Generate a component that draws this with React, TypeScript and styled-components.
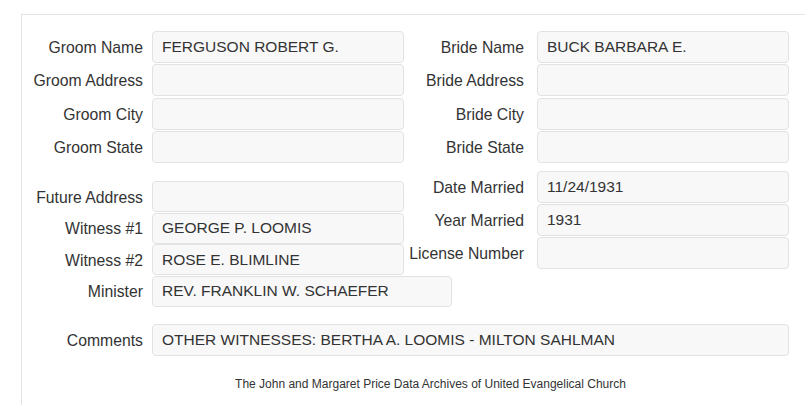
import React from "react";
import styled, { createGlobalStyle } from "styled-components";

const GlobalStyle = createGlobalStyle`
  html, body {
    margin: 0;
    padding: 0;
    background: #ffffff;
    overflow: hidden;
  }
  body {
    font-family: "Liberation Sans", Arial, Helvetica, sans-serif;
    color: #333333;
  }
`;

const Panel = styled.div`
  margin: 14px 0 0 21px;
  width: 818px;
  height: 391px;
  border-top: 1px solid #e3e3e3;
  border-left: 1px solid #e3e3e3;
  padding-top: 15.5px;
  box-sizing: border-box;
`;

const Section = styled.div<{ $top?: number }>`
  display: flex;
  align-items: flex-start;
  margin-top: ${(p) => p.$top ?? 0}px;
`;

const Column = styled.div<{ $gap: number; $width: number; $offset?: number }>`
  display: flex;
  flex-direction: column;
  flex-shrink: 0;
  width: ${(p) => p.$width}px;
  gap: ${(p) => p.$gap}px;
  padding-top: ${(p) => p.$offset ?? 0}px;
`;

const Row = styled.div<{ $gap: number }>`
  display: flex;
  align-items: center;
  gap: ${(p) => p.$gap}px;
`;

const Label = styled.div<{ $width: number }>`
  width: ${(p) => p.$width}px;
  flex-shrink: 0;
  text-align: right;
  font-size: 15.75px;
  line-height: 18px;
  white-space: nowrap;
  padding-top: 2px;
`;

const Field = styled.div<{ $width: number; $height: number }>`
  width: ${(p) => p.$width}px;
  height: ${(p) => p.$height}px;
  flex-shrink: 0;
  box-sizing: border-box;
  padding: 0 10px 0 9px;
  display: flex;
  align-items: center;
  background: #f8f8f8;
  border: 1px solid #e2e2e2;
  border-radius: 4px;
  font-size: 15.5px;
  color: #333333;
  white-space: nowrap;
  overflow: hidden;
`;

const Footer = styled.div`
  padding-top: 21px;
  text-align: center;
  font-size: 12px;
  line-height: 14px;
  color: #333333;
`;

type Item = { label: string; value?: string; width?: number };

const groom: Item[] = [
  { label: "Groom Name", value: "FERGUSON ROBERT G." },
  { label: "Groom Address" },
  { label: "Groom City" },
  { label: "Groom State" },
];

const bride: Item[] = [
  { label: "Bride Name", value: "BUCK BARBARA E." },
  { label: "Bride Address" },
  { label: "Bride City" },
  { label: "Bride State" },
];

const people: Item[] = [
  { label: "Future Address" },
  { label: "Witness #1", value: "GEORGE P. LOOMIS" },
  { label: "Witness #2", value: "ROSE E. BLIMLINE" },
  { label: "Minister", value: "REV. FRANKLIN W. SCHAEFER", width: 300 },
];

const marriage: Item[] = [
  { label: "Date Married", value: "11/24/1931" },
  { label: "Year Married", value: "1931" },
  { label: "License Number" },
];

const FieldList = ({
  items,
  width,
  labelWidth,
  gap,
  height,
  rowGap,
  offset,
}: {
  items: Item[];
  width: number;
  labelWidth: number;
  gap: number;
  height: number;
  rowGap: number;
  offset?: number;
}) => (
  <Column $gap={rowGap} $width={width} $offset={offset}>
    {items.map((it) => (
      <Row key={it.label} $gap={gap}>
        <Label $width={labelWidth}>{it.label}</Label>
        <Field $width={it.width ?? 252} $height={height}>
          {it.value}
        </Field>
      </Row>
    ))}
  </Column>
);

export default function App() {
  return (
    <>
      <GlobalStyle />
      <Panel>
        <Section>
          <FieldList items={groom} width={382} labelWidth={121} gap={9} height={32} rowGap={1.5} />
          <FieldList items={bride} width={385} labelWidth={120} gap={13} height={32} rowGap={1.5} />
        </Section>

        <Section $top={8}>
          <FieldList
            items={people}
            width={382}
            labelWidth={121}
            gap={9}
            height={31}
            rowGap={0.5}
            offset={10}
          />
          <FieldList
            items={marriage}
            width={385}
            labelWidth={120}
            gap={13}
            height={31.5}
            rowGap={1.5}
          />
        </Section>

        <Section $top={17.5}>
          <Row $gap={9}>
            <Label $width={121}>Comments</Label>
            <Field $width={637} $height={31.5}>
              OTHER WITNESSES: BERTHA A. LOOMIS - MILTON SAHLMAN
            </Field>
          </Row>
        </Section>

        <Footer>
          The John and Margaret Price Data Archives of United Evangelical Church
        </Footer>
      </Panel>
    </>
  );
}
